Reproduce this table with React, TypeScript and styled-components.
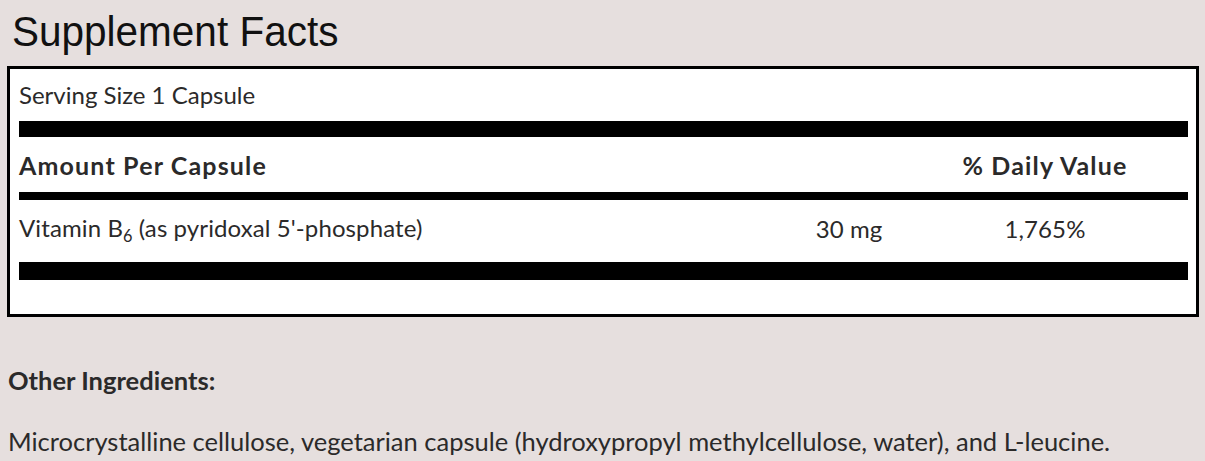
import styled, { createGlobalStyle } from "styled-components";

const GlobalStyle = createGlobalStyle`
  html, body {
    margin: 0;
    padding: 0;
    background: #e6dfde;
  }
`;

const Page = styled.div`
  width: 1205px;
  height: 461px;
  overflow: hidden;
  background: #e6dfde;
  color: #2b2a2a;
  font-family: "Lato", "Liberation Sans", sans-serif;
`;

const Title = styled.h1`
  margin: 0;
  padding: 11px 0 0 12px;
  height: 58px;
  box-sizing: border-box;
  font-family: "Liberation Sans", Arial, sans-serif;
  font-weight: 400;
  font-size: 40.5px;
  line-height: 44px;
  color: #111;
  transform: scaleY(1.06);
  transform-origin: left bottom;
`;

const FactsBox = styled.div`
  margin: 8px 6px 0 7px;
  border: 3px solid #000;
  background: #fff;
  padding: 0 8px 34px 9px;
`;

const Serving = styled.div`
  font-size: 24px;
  line-height: 52px;
  height: 52px;
`;

const Bar = styled.div<{ $h: number }>`
  height: ${(p) => p.$h}px;
  background: #000;
`;

const Row = styled.div<{ $bold?: boolean; $h: number }>`
  display: grid;
  grid-template-columns: 1fr 106px 286px;
  align-items: center;
  box-sizing: border-box;
  height: ${(p) => p.$h}px;
  padding-bottom: ${(p) => (p.$bold ? 0 : 5)}px;
  font-size: ${(p) => (p.$bold ? 25 : 24)}px;
  font-weight: ${(p) => (p.$bold ? 700 : 400)};
  letter-spacing: ${(p) => (p.$bold ? "1.15px" : "0.1px")};
`;

const Cell = styled.span<{ $center?: boolean }>`
  text-align: ${(p) => (p.$center ? "center" : "left")};
`;

const Sub = styled.sub`
  font-size: 0.68em;
  vertical-align: -0.3em;
`;

const Section = styled.div`
  padding: 0 8px;
  font-size: 25.5px;
`;

const Heading = styled.div`
  font-weight: 700;
  margin-top: 48px;
  line-height: 30px;
`;

const Text = styled.p`
  margin: 31px 0 0;
  line-height: 30px;
  white-space: nowrap;
`;

export default function App() {
  return (
    <>
      <GlobalStyle />
      <Page>
        <Title>Supplement Facts</Title>
        <FactsBox>
          <Serving>Serving Size 1 Capsule</Serving>
          <Bar $h={16} />
          <Row $bold $h={55}>
            <Cell>Amount Per Capsule</Cell>
            <Cell />
            <Cell $center>% Daily Value</Cell>
          </Row>
          <Bar $h={8} />
          <Row $h={62}>
            <Cell>
              Vitamin B<Sub>6</Sub> (as pyridoxal 5'-phosphate)
            </Cell>
            <Cell $center>30 mg</Cell>
            <Cell $center>1,765%</Cell>
          </Row>
          <Bar $h={18} />
        </FactsBox>
        <Section>
          <Heading>Other Ingredients:</Heading>
          <Text>
            Microcrystalline cellulose, vegetarian capsule (hydroxypropyl methylcellulose, water), and L-leucine.
          </Text>
        </Section>
      </Page>
    </>
  );
}
